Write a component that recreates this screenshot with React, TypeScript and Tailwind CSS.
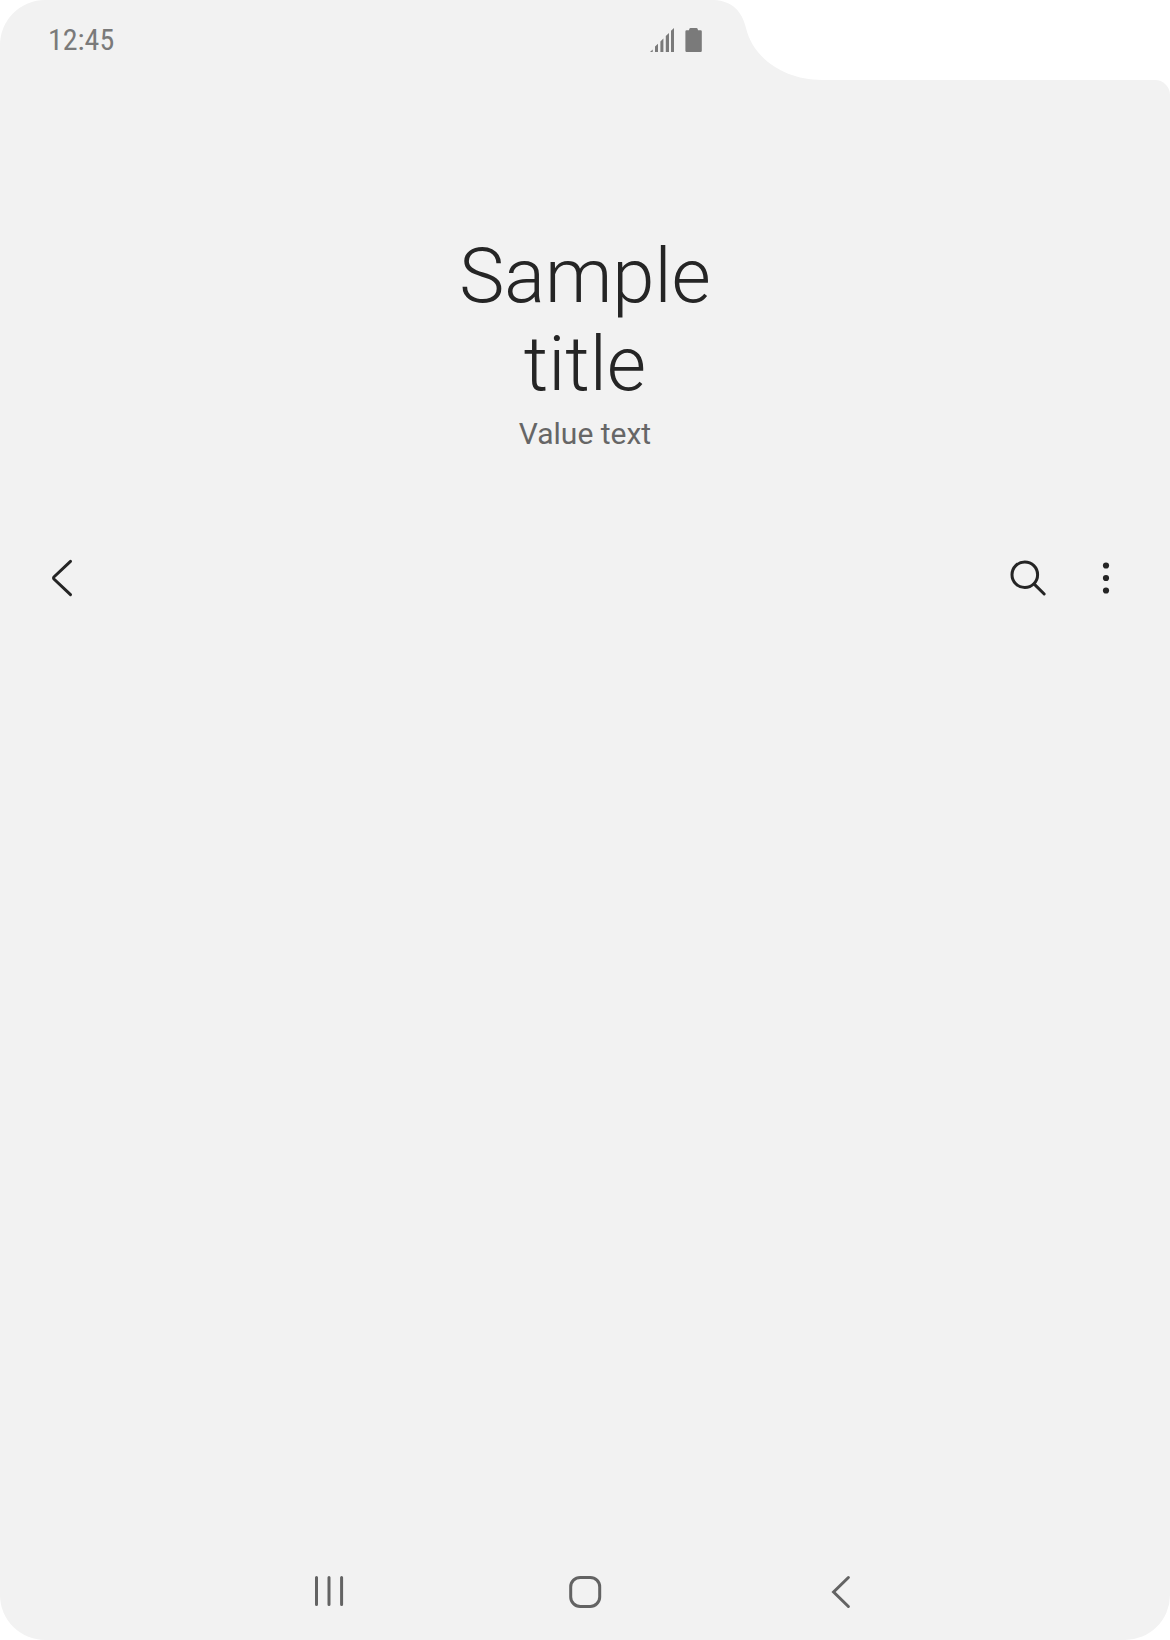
function SignalIcon() {
  return (
    <svg width="24" height="24" viewBox="0 0 24 24" fill="currentColor" role="img" aria-label="Signal strength">
      <path d="M0 24 L2.7 21.6 V24Z M5 24 V18.6 L8 15.8 V24Z M10.4 24 V13.4 L13.4 10.6 V24Z M15.8 24 V8 L19 5 V24Z M21 24 V2.8 L24 0 V24Z" />
    </svg>
  );
}

function BatteryIcon() {
  return (
    <svg width="17" height="24" viewBox="0 0 17 24" fill="currentColor" role="img" aria-label="Battery">
      <path d="M5.6 0 H11.4 Q12.4 0 12.7 1 L13 2.3 H15.7 Q16.8 2.3 16.8 3.5 V22.8 Q16.8 24 15.7 24 H1.6 Q0.4 24 0.4 22.8 V3.5 Q0.4 2.3 1.6 2.3 H4 L4.3 1 Q4.6 0 5.6 0Z" />
    </svg>
  );
}

function StatusBar() {
  return (
    <header className="flex h-20">
      <div className="flex min-w-0 basis-[714px] items-start justify-between rounded-tl-[45px] bg-[#f2f2f2] pt-7 pr-3 pl-12 text-[#7a7a7a]">
        <time className="-mt-1.5 font-['Roboto_Condensed','Roboto',sans-serif] text-[30px] leading-9">12:45</time>
        <div className="flex gap-[11px]">
          <SignalIcon />
          <BatteryIcon />
        </div>
      </div>
      <svg className="shrink-0" width="110" height="80" viewBox="0 0 110 80" aria-hidden="true">
        <path d="M0 0 C18 1 28 11 32 28 C39 58 70 80 108 80 H0Z" fill="#f2f2f2" />
      </svg>
    </header>
  );
}

function Toolbar() {
  return (
    <div className="mt-24 flex items-center justify-between pr-[34px] pl-8 text-[#252525]">
      <button type="button" aria-label="Navigate up" className="flex size-15 items-center justify-center">
        <svg width="40" height="40" viewBox="0 0 40 40" fill="none" stroke="currentColor" strokeWidth="3" strokeLinecap="round" strokeLinejoin="round">
          <path d="M28.5 3.3 L11.9 19 Q11.1 20 11.9 21 L28.5 36.7" />
        </svg>
      </button>
      <div className="flex gap-[18px]">
        <button type="button" aria-label="Search" className="flex size-15 items-center justify-center">
          <svg width="40" height="40" viewBox="0 0 40 40" fill="none" stroke="currentColor" strokeWidth="3" strokeLinecap="round">
            <circle cx="16.8" cy="16.7" r="12.8" />
            <path d="M26.5 26.4 L36.2 36" />
          </svg>
        </button>
        <button type="button" aria-label="More options" className="flex size-15 items-center justify-center">
          <svg width="40" height="40" viewBox="0 0 40 40" fill="currentColor">
            <circle cx="20" cy="7.5" r="3.1" />
            <circle cx="20" cy="20" r="3.1" />
            <circle cx="20" cy="32.5" r="3.1" />
          </svg>
        </button>
      </div>
    </div>
  );
}

function NavigationBar() {
  return (
    <nav aria-label="System navigation" className="mx-auto grid w-full max-w-[768px] grid-cols-3 justify-items-center pb-[18px] text-[#636363]">
      <button type="button" aria-label="Recent apps" className="flex size-15 items-center justify-center">
        <svg width="40" height="40" viewBox="0 0 40 40" fill="none" stroke="currentColor" strokeWidth="3" strokeLinecap="round">
          <path d="M7.5 5.5 V32.5 M20 5.5 V32.5 M32.6 5.5 V32.5" />
        </svg>
      </button>
      <button type="button" aria-label="Home" className="flex size-15 items-center justify-center">
        <svg width="40" height="40" viewBox="0 0 40 40" fill="none" stroke="currentColor" strokeWidth="3">
          <rect x="5.7" y="5.4" width="29" height="29" rx="9.5" />
        </svg>
      </button>
      <button type="button" aria-label="Back" className="flex size-15 items-center justify-center">
        <svg width="40" height="40" viewBox="0 0 40 40" fill="none" stroke="currentColor" strokeWidth="3" strokeLinecap="round" strokeLinejoin="miter">
          <path d="M27.4 5.5 L12.6 20 L27.4 34.5" />
        </svg>
      </button>
    </nav>
  );
}

export default function App() {
  return (
    <div className="flex min-h-screen flex-col bg-white font-['Roboto',sans-serif]">
      <StatusBar />
      <main className="flex flex-1 flex-col rounded-tr-[15px] rounded-b-[45px] bg-[#f2f2f2] pt-[152px]">
        <div className="text-center">
          <h1 className="mx-auto max-w-[300px] text-[76px] leading-[88px] font-light text-[#252525]">Sample title</h1>
          <p className="mt-2 text-[30px] leading-9 text-[#666666]">Value text</p>
        </div>
        <Toolbar />
        <div className="flex-1" />
        <NavigationBar />
      </main>
    </div>
  );
}
